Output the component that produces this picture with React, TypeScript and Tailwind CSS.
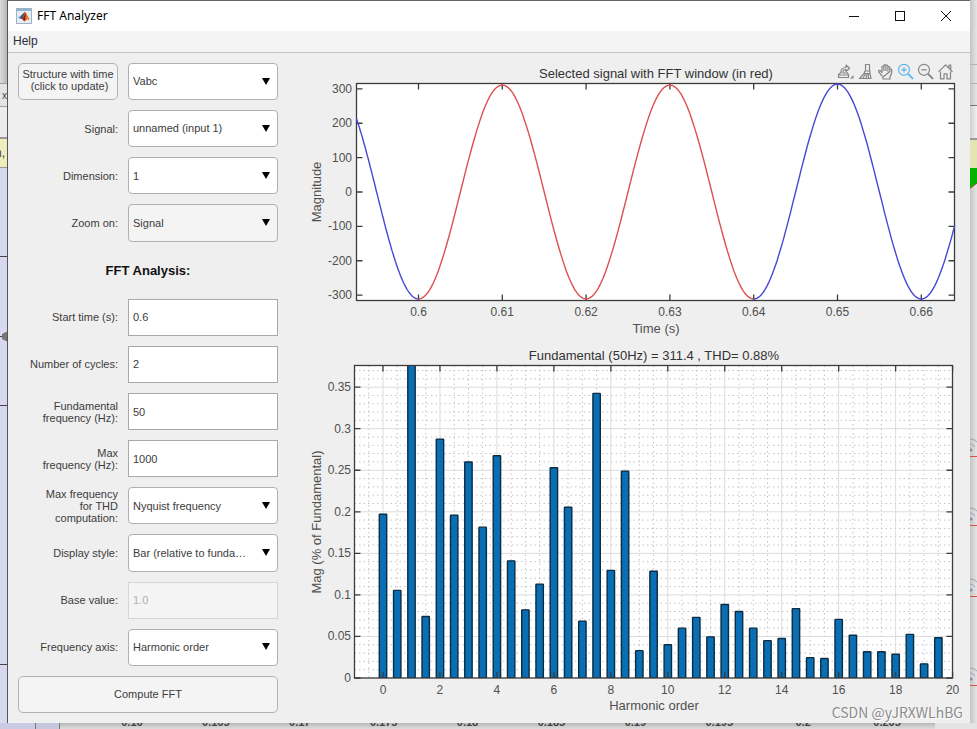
import type { ReactNode } from "react";

const INK = "#4f4f4f";

const harmonics = [
  0.197, 0.1055, 0.4, 0.074, 0.2875, 0.196, 0.26, 0.1815, 0.2675, 0.141,
  0.082, 0.113, 0.253, 0.2055, 0.0685, 0.3425, 0.1295, 0.249, 0.033, 0.1285,
  0.04, 0.06, 0.073, 0.0495, 0.0885, 0.08, 0.06, 0.045, 0.0475, 0.0835,
  0.0245, 0.0235, 0.0705, 0.0515, 0.0315, 0.0315, 0.0285, 0.0525, 0.017, 0.0485,
];

const range = (count: number) => Array.from({ length: count }, (_, i) => i);

const MatlabIcon = () => (
  <svg width="16" height="16" viewBox="0 0 16 16" aria-hidden="true">
    <rect x="0.5" y="0.5" width="15" height="15" fill="#e6edf4" stroke="#9fb2c4" />
    <rect x="1" y="1" width="14" height="2" fill="#8fb4d6" />
    <path d="M2 9.5 5 7.800 6.800 9.200 4.800 11Z" fill="#4a8fc0" />
    <path d="M5 7.800 8.800 3.800 8 8.500 6.200 10.600 4.800 11Z" fill="#27567c" />
    <path d="M8.800 3.800C10 4.200 11.500 8 13.800 11.800c-1.600-.8-2.500-.8-3.400.2L8.200 13.400 6 10.800Z" fill="#d9541a" />
    <path d="M9.200 4.500C9.800 7 9.700 10 8.400 13.200L6.200 10.800C8 9 8.600 7 9.200 4.500Z" fill="#8c2413" />
    <path d="M9.700 5.500c1.200 2 1.800 4 2.600 5.300l-1.900.8C10.500 9.500 10.200 7.500 9.700 5.500Z" fill="#f39a2b" />
  </svg>
);

const TitleButton = ({ label, children }: { label: string; children: ReactNode }) => (
  <button type="button" aria-label={label} className="flex h-full w-[46px] items-center justify-center">
    <svg width="12" height="12" viewBox="0 0 12 12" fill="none" stroke="#111" strokeWidth="1">
      {children}
    </svg>
  </button>
);

const TitleBar = () => (
  <header className="flex h-[30px] items-center bg-white pr-px pb-px pl-2">
    <MatlabIcon />
    <h1 className="ml-[5px] flex-1 font-['Noto_Sans',sans-serif] text-[12px] text-black">FFT Analyzer</h1>
    <TitleButton label="Minimize">
      <path d="M1 6.5h10" />
    </TitleButton>
    <TitleButton label="Maximize">
      <rect x="1.5" y="1.5" width="9" height="9" />
    </TitleButton>
    <TitleButton label="Close">
      <path d="M1 1l10 10M11 1L1 11" />
    </TitleButton>
  </header>
);

const labelClass = "text-right text-[11px] leading-3 whitespace-pre-line";

const SelectRow = ({ id, label, value, muted }: { id: string; label: string; value: string; muted?: boolean }) => (
  <>
    <label htmlFor={id} className={labelClass}>{label}</label>
    <SelectBox id={id} value={value} muted={muted} />
  </>
);

const SelectBox = ({ id, value, muted, label }: { id: string; value: string; muted?: boolean; label?: string }) => (
  <div className="relative h-full">
    <select
      id={id}
      aria-label={label}
      className={`h-full w-full appearance-none rounded-[4px] border border-[#b0b0b0] pr-6 pl-1 text-[11px] ${muted ? "bg-[#f4f4f4]" : "bg-white"}`}
    >
      <option>{value}</option>
    </select>
    <svg className="pointer-events-none absolute top-1/2 right-2 -translate-y-1/2" width="8" height="8" viewBox="0 0 8 8">
      <path d="M0 0h8L4 7Z" fill="#000" />
    </svg>
  </div>
);

const InputRow = ({ id, label, value, disabled }: { id: string; label: string; value: string; disabled?: boolean }) => (
  <>
    <label htmlFor={id} className={labelClass}>{label}</label>
    <input
      id={id}
      type="text"
      defaultValue={value}
      disabled={disabled}
      className="h-full w-full border border-[#a8a8a8] bg-white px-1 text-[11px] disabled:border-[#d6d6d6] disabled:bg-[#f4f4f4] disabled:text-[#b0b0b0]"
    />
  </>
);

const buttonClass = "h-full rounded-[5px] border border-[#b0b0b0] bg-[#f4f4f4] text-[11px] leading-3";

const SettingsForm = () => (
  <form className="grid w-[260px] shrink-0 auto-rows-fr grid-cols-[100px_150px] items-center gap-[10px] text-[#3c3c3c]">
    <button type="button" className={`pb-[3px] ${buttonClass}`}>
      Structure with time
      <br />
      &nbsp;(click to update)
    </button>
    <SelectBox id="structure" label="Structure with time" value="Vabc" />
    <SelectRow id="signal" label="Signal:" value="unnamed (input 1)" />
    <SelectRow id="dimension" label="Dimension:" value="1" />
    <SelectRow id="zoom" label="Zoom on:" value="Signal" muted />
    <h2 className="col-span-2 pt-0.5 text-center text-[13px] font-bold text-[#111]">FFT Analysis:</h2>
    <InputRow id="start" label="Start time (s):" value="0.6" />
    <InputRow id="cycles" label="Number of cycles:" value="2" />
    <InputRow id="fundamental" label={"Fundamental\nfrequency (Hz):"} value="50" />
    <InputRow id="max" label={"Max\nfrequency (Hz):"} value="1000" />
    <SelectRow id="thd" label={"Max frequency\nfor THD\ncomputation:"} value="Nyquist frequency" />
    <SelectRow id="display" label="Display style:" value="Bar (relative to funda…" />
    <InputRow id="base" label="Base value:" value="1.0" disabled />
    <SelectRow id="axis" label="Frequency axis:" value="Harmonic order" />
    <button type="button" className={`col-span-2 ${buttonClass}`}>Compute FFT</button>
  </form>
);

const ToolButton = ({ label, active, children }: { label: string; active?: boolean; children: ReactNode }) => (
  <button
    type="button"
    aria-label={label}
    className={`flex w-5 justify-center ${active ? "text-[#5eb4ec]" : "text-[#858585]"}`}
  >
    <svg width="17" height="17" viewBox="0 0 17 17" fill="none" stroke="currentColor" strokeWidth="1.200" strokeLinejoin="round">
      {children}
    </svg>
  </button>
);

const AxesToolbar = () => (
  <div className="absolute top-[10px] right-[15px] flex" role="toolbar" aria-label="Axes tools">
    <ToolButton label="Export">
      <path d="M4 10C3.500 6.500 5.500 4.500 9 4.500V2l3.500 3.300L9 8.500V6.600C7 6.500 5.500 7.500 6 10h4.500" />
      <path d="M4 9.500 1.500 11.500v3h10v-3l-1.500-2M1.500 12h10" />
      <path d="M13 15.500h3.500v-3.500Z" fill="currentColor" stroke="none" />
    </ToolButton>
    <ToolButton label="Brush">
      <path d="M8.500 1.500h4V8h-4ZM8 8h5v2.500H7ZM7 10.500 2.500 15.500h11.500l-1-5M6 15l2.500-4M9 15l1.200-4M11.500 15v-4" />
    </ToolButton>
    <ToolButton label="Pan">
      <path d="M5.500 13.500C4 11.500 2 9.500 1.500 8.300c0-1.200 1.300-1.300 2-.5L5 9.500V4c0-1.300 1.800-1.300 1.900 0V8M6.900 8V2.700c0-1.400 2-1.400 2 0V8M8.900 8V3c0-1.300 1.900-1.300 2 0v5.500M10.900 8V4.500c.2-1.200 2-1.200 2 0V9M12.900 8.500V6.700c.3-1 1.900-1 1.900.2 0 3-.3 5-1.800 6.600V16H6v-2Z" />
    </ToolButton>
    <ToolButton label="Zoom in" active>
      <circle cx="7" cy="6.800" r="5.500" />
      <path d="M4.300 6.800h5.400M7 4.100v5.400" />
      <path d="M11 10.800l5 5" strokeWidth="1.900" />
    </ToolButton>
    <ToolButton label="Zoom out">
      <circle cx="7" cy="6.800" r="5.500" />
      <path d="M4.300 6.800h5.400" />
      <path d="M11 10.800l5 5" strokeWidth="1.900" />
    </ToolButton>
    <ToolButton label="Restore view">
      <path d="M1.500 8.800 8.500 1.800l7 7M12 5V2h1.800v4.800M3.500 8.500v7.300H7v-5h3v5h3.500V8.500" />
    </ToolButton>
  </div>
);

// Time plot: 0.6 s sits at x=118.5, zero volts at y=139
const timeX = (t: number) => 118.5 + (t - 0.6) * 8380;
const magY = (v: number) => 139 - v * 0.3437;

const wave = (from: number, to: number) => {
  const steps = 120;
  return range(steps + 1)
    .map((i) => {
      const t = from + ((to - from) * i) / steps;
      const amp = t > 0.645 && t < 0.655 ? 314 : 311.4;
      return `${timeX(t).toFixed(1)},${magY(-amp * Math.cos(2 * Math.PI * 50 * (t - 0.6))).toFixed(1)}`;
    })
    .join(" ");
};

const SignalChart = () => (
  <svg viewBox="0 0 670 288" className="block h-auto w-full" fill={INK} fontSize="12" role="img" aria-label="Selected signal">
    <rect x="56.5" y="30.5" width="598" height="217" fill="#fff" />
    <text x="356" y="25" fontSize="13" textAnchor="middle" fill="#333">Selected signal with FFT window (in red)</text>
    <g stroke="#3c3c3c" strokeWidth="1.300" fill="none">
      <rect x="56.5" y="30.5" width="598" height="217" />
      {range(7).map((i) => {
        const x = timeX(0.6 + i * 0.01);
        return <path key={i} d={`M${x} 30.5v6M${x} 247.5v-6`} />;
      })}
      {range(7).map((i) => {
        const y = magY(300 - i * 100);
        return <path key={i} d={`M56.5 ${y}h6M654.5 ${y}h-6`} />;
      })}
    </g>
    {range(7).map((i) => (
      <text key={i} x={timeX(0.6 + i * 0.01)} y="263" textAnchor="middle">{Number((0.6 + i * 0.01).toFixed(2))}</text>
    ))}
    {range(7).map((i) => (
      <text key={i} x="52" y={magY(300 - i * 100) + 4} textAnchor="end">{300 - i * 100}</text>
    ))}
    <g fill="none" strokeWidth="1.400">
      <polyline points={wave(0.5926, 0.6)} stroke="#4848d4" />
      <polyline points={wave(0.6, 0.64)} stroke="#dc5050" />
      <polyline points={wave(0.64, 0.664)} stroke="#4848d4" />
    </g>
    <text x="356" y="280" fontSize="13" textAnchor="middle">Time (s)</text>
    <text transform="translate(21 139) rotate(-90)" fontSize="13" textAnchor="middle">Magnitude</text>
  </svg>
);

// Spectrum: order 0 sits at x=83, zero magnitude at y=337
const orderX = (n: number) => 83 + n * 28.48;
const pctY = (v: number) => 337 - v * 831;

const SpectrumChart = () => (
  <svg viewBox="0 0 670 382" className="block h-auto w-full" fill={INK} fontSize="12" role="img" aria-label="Harmonic spectrum">
    <defs>
      <clipPath id="plot">
        <rect x="54.5" y="24.5" width="598" height="312.5" />
      </clipPath>
    </defs>
    <rect x="54.5" y="24.5" width="598" height="312.5" fill="#fff" />
    <text x="354" y="19" fontSize="13" textAnchor="middle" fill="#333">Fundamental (50Hz) = 311.4 , THD= 0.88%</text>
    <g stroke="#c4c4c4" strokeWidth="1" strokeDasharray="1.500 3">
      {range(41).filter((i) => i % 4 !== 1).map((i) => (
        <path key={i} d={`M${orderX(i / 2 - 0.5)} 24.5V337`} />
      ))}
      {range(38).filter((i) => i % 5 !== 0).map((i) => (
        <path key={i} d={`M54.5 ${pctY(i / 100)}h598`} />
      ))}
    </g>
    <g stroke="#dcdcdc" strokeWidth="1">
      {range(10).map((i) => <path key={i} d={`M${orderX(i * 2)} 24.5V337`} />)}
      {range(8).map((i) => <path key={i} d={`M54.5 ${pctY(i * 0.05)}h598`} />)}
    </g>
    <g fill="#0a6eb4" stroke="#0c2c40" strokeWidth="1.400" clipPath="url(#plot)">
      {harmonics.map((v, i) => (
        <rect key={i} x={orderX(i / 2) - 3.7} y={pctY(v)} width="7.400" height={v * 831} rx="0.500" />
      ))}
    </g>
    <g stroke="#3c3c3c" strokeWidth="1.300" fill="none">
      <rect x="54.5" y="24.5" width="598" height="312.5" />
      {range(11).map((i) => (
        <path key={i} d={`M${orderX(i * 2)} 24.5v6M${orderX(i * 2)} 337v-6`} />
      ))}
      {range(8).map((i) => (
        <path key={i} d={`M54.5 ${pctY(i * 0.05)}h6M652.5 ${pctY(i * 0.05)}h-6`} />
      ))}
    </g>
    {range(11).map((i) => (
      <text key={i} x={orderX(i * 2)} y="353" textAnchor="middle">{i * 2}</text>
    ))}
    {range(8).map((i) => (
      <text key={i} x="51" y={pctY(i * 0.05) + 4} textAnchor="end">{Number((i * 0.05).toFixed(2))}</text>
    ))}
    <text x="354" y="369" fontSize="13" textAnchor="middle">Harmonic order</text>
    <text transform="translate(21 181) rotate(-90)" fontSize="13" textAnchor="middle">Mag (% of Fundamental)</text>
  </svg>
);

// Slivers of the model editor that stay visible around the window
const LeftEdge = () => (
  <div className="flex flex-col overflow-hidden border-r border-[#555] bg-[#d8d8f0] text-[12px] text-[#444]">
    <div className="h-[83px] bg-linear-to-r from-[#dcdcdc] to-[#b8b8b8]" />
    <div className="flex h-6 items-center justify-end border-y border-[#a0a0a0] bg-[#e4e4e4] text-[10px]">x</div>
    <div className="h-[30px] bg-[#ececec]" />
    <div className="flex h-[31px] items-center justify-end border-t-2 border-b border-[#999] bg-[#eeeebc] pr-0.5">n,</div>
    <svg width="8" height="500" viewBox="0 0 8 500" stroke="#444">
      <path d="M0 88.500h8M0 168.500h8M0 237.500h8M0 496.500h8" />
      <path d="M8 163 2 166v5l6 3Z" fill="#777" stroke="none" />
    </svg>
  </div>
);

const RightEdge = () => (
  <div className="flex flex-col overflow-hidden bg-linear-to-r from-[#c4c4c4] to-[#e6e6e6]">
    <div className="h-16" />
    <div className="h-5 border-y border-[#b0b0b0]" />
    <div className="h-[22px] border-b border-[#777]" />
    <div className="h-8 bg-linear-to-r from-[#cfcfcf] to-[#f2f2f2]" />
    <div className="h-[30px] border-t-2 border-[#999] bg-[#e4e4b4]" />
    <svg width="7" height="540" viewBox="0 0 7 540" fill="none">
      <path d="M0 0h7v15L0 20Z" fill="#00b400" />
      <path d="M0 20.500 7 15" stroke="#8a4a20" />
      {[288, 357, 428, 517].map((y) => (
        <g key={y}>
          <path d={`M0 ${y}.500h7`} stroke="#d05050" />
          <g stroke="#94a4b8">
            <path d={`M0 ${y - 17}q5 0 8 4M0 ${y - 12}q3 0 5 3`} />
            <circle cx="1" cy={y - 6} r="1.500" fill="#8090a4" stroke="none" />
          </g>
        </g>
      ))}
    </svg>
  </div>
);

const scopeTicks = ["0.16", "0.165", "0.17", "0.175", "0.18", "0.185", "0.19", "0.195", "0.2", "0.205"];

const BottomEdge = () => (
  <div className="col-span-3 flex h-[6px] overflow-hidden bg-linear-to-b from-[#b8b8b8] to-[#dedede] text-[11px] leading-3 font-bold text-[#444]">
    <div className="w-[36px] border-r border-[#777] bg-[#cacae4]" />
    <div className="w-[24px] border-r border-[#777] bg-[#c6c6dc]" />
    <div className="-mt-[7px] ml-[30px] grid flex-1 grid-cols-10 text-center">
      {scopeTicks.map((tick) => <span key={tick}>{tick}</span>)}
    </div>
    <div className="ml-[6px] w-[42px] bg-[#e4e4e4]" />
  </div>
);

const App = () => {
  return (
    <div className="relative grid min-h-screen grid-cols-[8px_minmax(0,1fr)_7px] grid-rows-[1fr_6px] font-['Liberation_Sans',Arial,sans-serif]">
      <LeftEdge />
      <div className="flex flex-col border-t border-[#666] bg-[#efefef]">
        <TitleBar />
        <nav className="flex h-[22px] items-center border-b border-[#c4c4c4] bg-[#f4f4f4] pb-0.5 pl-[5px]">
          <button type="button" className="text-[12px] text-[#2c2c3c]">Help</button>
        </nav>
        <main className="flex flex-1">
          <div className="flex pt-[10px] pb-[10px] pl-[10px]">
            <SettingsForm />
          </div>
          <div className="relative ml-[22px] min-w-0 flex-1">
            <SignalChart />
            <AxesToolbar />
            <SpectrumChart />
          </div>
        </main>
      </div>
      <RightEdge />
      <BottomEdge />
      <div className="absolute right-[14px] bottom-[9px] font-['Noto_Sans_CJK_SC',sans-serif] text-[14px] leading-4 text-[#8c8c8c] [text-shadow:1px_1px_0_#fff]">
        CSDN @yJRXWLhBG
      </div>
    </div>
  );
};

export default App;
